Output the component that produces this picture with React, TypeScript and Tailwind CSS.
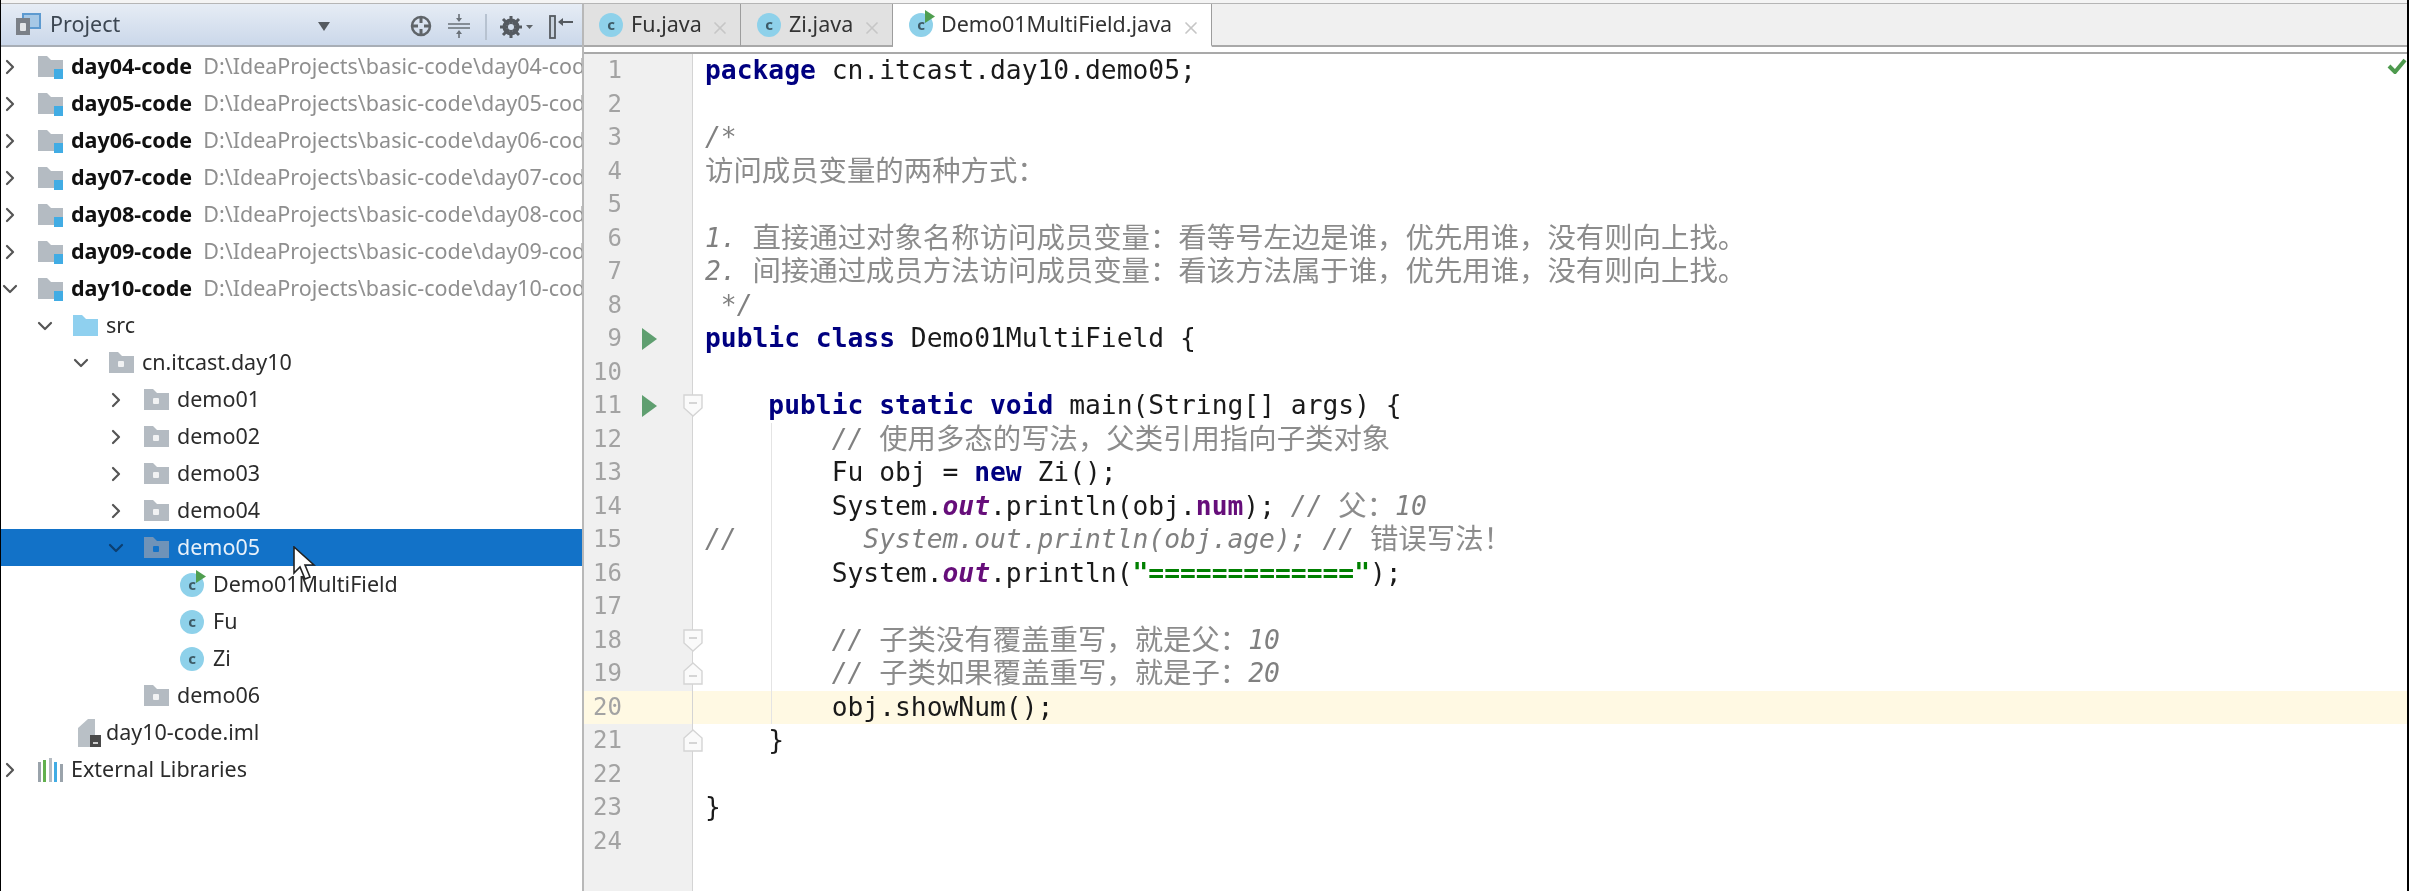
import React from "react";
import { ChevronDown, ChevronRight, X } from "lucide-react";

type TreeRow = {
  name: string;
  path?: string;
  depth: number;
  open?: boolean;
  arrow?: boolean;
  icon: "module" | "src" | "pkg" | "run" | "class" | "iml" | "libs";
  selected?: boolean;
};

const days = ["04", "05", "06", "07", "08", "09"];

const tree: TreeRow[] = [
  ...days.map((d): TreeRow => ({
    name: `day${d}-code`,
    path: `D:\\IdeaProjects\\basic-code\\day${d}-code`,
    depth: 0,
    arrow: true,
    icon: "module",
  })),
  { name: "day10-code", path: "D:\\IdeaProjects\\basic-code\\day10-code", depth: 0, arrow: true, open: true, icon: "module" },
  { name: "src", depth: 1, arrow: true, open: true, icon: "src" },
  { name: "cn.itcast.day10", depth: 2, arrow: true, open: true, icon: "pkg" },
  { name: "demo01", depth: 3, arrow: true, icon: "pkg" },
  { name: "demo02", depth: 3, arrow: true, icon: "pkg" },
  { name: "demo03", depth: 3, arrow: true, icon: "pkg" },
  { name: "demo04", depth: 3, arrow: true, icon: "pkg" },
  { name: "demo05", depth: 3, arrow: true, open: true, icon: "pkg", selected: true },
  { name: "Demo01MultiField", depth: 4, icon: "run" },
  { name: "Fu", depth: 4, icon: "class" },
  { name: "Zi", depth: 4, icon: "class" },
  { name: "demo06", depth: 3, icon: "pkg" },
  { name: "day10-code.iml", depth: 1, icon: "iml" },
  { name: "External Libraries", depth: 0, arrow: true, icon: "libs" },
];

const depthPad = ["pl-0", "pl-[35px]", "pl-[71px]", "pl-[106px]", "pl-[142px]"];

function Folder({ fill = "#b4bbc2", children }: { fill?: string; children?: React.ReactNode }) {
  return (
    <svg width="25" height="24" viewBox="0 0 25 24" className="shrink-0">
      <path d="M0 1h9l4 4h12v17H0z" fill={fill} />
      {children}
    </svg>
  );
}

function ClassIcon({ run = false }: { run?: boolean }) {
  return (
    <div className="relative w-[24px] h-[24px] shrink-0 rounded-full bg-[#8ed1ea] flex items-center justify-center text-[15px] leading-none font-bold text-[#3d5a66] font-['Noto_Sans',sans-serif]">
      c
      {run && (
        <svg width="10" height="13" viewBox="0 0 10 13" className="absolute -top-[3px] -right-[2px]">
          <path d="M0 0l10 6.5L0 13z" fill="#4f9e4f" />
        </svg>
      )}
    </div>
  );
}

function TreeIcon({ kind, selected }: { kind: TreeRow["icon"]; selected?: boolean }) {
  if (kind === "module")
    return (
      <Folder>
        <rect x="16" y="14" width="9" height="10" fill="#41ace4" />
      </Folder>
    );
  if (kind === "src") return <Folder fill="#8fd0ef" />;
  if (kind === "pkg")
    return (
      <Folder fill={selected ? "#6f93b8" : "#b4bbc2"}>
        <rect x="9" y="10" width="6" height="6" rx="1" fill={selected ? "#1272c8" : "#f1f2f3"} />
      </Folder>
    );
  if (kind === "run") return <ClassIcon run />;
  if (kind === "class") return <ClassIcon />;
  if (kind === "iml")
    return (
      <svg width="23" height="30" viewBox="0 0 23 30" className="shrink-0">
        <path d="M0 10l10-9h7v28H0z" fill="#b9c0c6" />
        <rect x="12" y="17" width="11" height="12" fill="#4a4a4a" />
        <rect x="15" y="24" width="5" height="2" fill="#cfcfcf" />
      </svg>
    );
  return (
    <svg width="25" height="24" viewBox="0 0 25 24" className="shrink-0">
      <rect x="0" y="4" width="3" height="20" fill="#9aa3ab" />
      <rect x="5" y="2" width="3" height="22" fill="#62b04e" />
      <rect x="11" y="0" width="3" height="24" fill="#b4bbc2" />
      <rect x="16" y="4" width="3" height="20" fill="#41ace4" />
      <rect x="22" y="6" width="3" height="18" fill="#9aa3ab" />
    </svg>
  );
}

function Row({ row }: { row: TreeRow }) {
  const iconSlot = row.icon === "iml" ? "w-[33px] pl-[5px]" : "w-[33px]";
  return (
    <div
      className={`flex items-center h-[37px] whitespace-nowrap overflow-hidden ${depthPad[row.depth]} ${
        row.selected ? "bg-[#1272c8] text-[#e8f1fa]" : "text-[#2b2b2b]"
      }`}
    >
      <div className="w-[37px] shrink-0 flex">
        {row.arrow &&
          (row.open ? (
            <ChevronDown size={24} strokeWidth={2.2} className={`-ml-[3px] ${row.selected ? "text-[#0d3f70]" : "text-[#555]"}`} />
          ) : (
            <ChevronRight size={24} strokeWidth={2.2} className="-ml-[3px] text-[#555]" />
          ))}
      </div>
      <div className={`${iconSlot} shrink-0 flex items-center`}>
        <TreeIcon kind={row.icon} selected={row.selected} />
      </div>
      <span className={row.path ? "font-bold text-[#111]" : ""}>{row.name}</span>
      {row.path && <span className="ml-[11px] text-[#8f8f8f]">{row.path}</span>}
    </div>
  );
}

function ProjectIcon() {
  return (
    <svg width="26" height="23" viewBox="0 0 26 23">
      <rect x="8" y="1" width="17" height="14" fill="#a6c8e6" stroke="#5d9ad0" strokeWidth="2" />
      <rect x="1" y="5" width="14" height="17" fill="#7b8087" />
      <rect x="5" y="10" width="6" height="8" rx="1" fill="#e4e6e8" />
    </svg>
  );
}

function ToolButtons() {
  return (
    <>
      <svg width="22" height="22" viewBox="0 0 22 22" className="absolute left-[409px] top-[11px]">
        <circle cx="11" cy="11" r="9" fill="none" stroke="#5f6469" strokeWidth="2.5" />
        <path d="M11 3v5M11 14v5M3 11h5M14 11h5" stroke="#5f6469" strokeWidth="3" />
      </svg>
      <svg width="24" height="26" viewBox="0 0 24 26" className="absolute left-[446px] top-[9px]">
        <path d="M1 11h22M1 15h22" stroke="#6a7178" strokeWidth="1.6" />
        <path d="M12 1v7M12 18v7" stroke="#6a7178" strokeWidth="1.6" />
        <path d="M9 5l3 4 3-4zM9 21l3-4 3 4z" fill="#6a7178" />
      </svg>
      <div className="absolute left-[484px] top-[10px] w-[2px] h-[26px] bg-[#b7c2d0]" />
      <svg width="34" height="24" viewBox="0 0 34 24" className="absolute left-[498px] top-[11px]">
        <circle cx="12" cy="12" r="6.5" fill="none" stroke="#555a60" strokeWidth="4" />
        <path d="M12 1v22M1 12h22M4 4l16 16M20 4L4 20" stroke="#555a60" strokeWidth="3" />
        <circle cx="12" cy="12" r="3" fill="#d3deec" />
        <path d="M27 10h7l-3.5 4z" fill="#5f6469" />
      </svg>
      <svg width="24" height="24" viewBox="0 0 24 24" className="absolute left-[548px] top-[11px]">
        <rect x="1" y="1" width="5" height="22" fill="#c9d3df" stroke="#555a60" strokeWidth="1.8" />
        <path d="M10 7h14" stroke="#555a60" strokeWidth="2" />
        <path d="M9 7l5-4v8z" fill="#555a60" />
      </svg>
    </>
  );
}

function Tab({ name, active, run, width, pad }: { name: string; active?: boolean; run?: boolean; width: string; pad: string }) {
  return (
    <div
      className={`${width} ${pad} relative flex items-center border-r border-r-[#9d9d9d] border-b-2 ${
        active ? "bg-white border-b-white" : "bg-[#e1e1e1] border-b-[#a9a9a9]"
      }`}
    >
      <ClassIcon run={run} />
      <span className="ml-[8px] text-[#333]">{name}</span>
      <X size={20} strokeWidth={2} className="absolute right-[10px] top-[14px] text-[#c6c6c6]" />
    </div>
  );
}

function Cjk({ children }: { children: React.ReactNode }) {
  return (
    <span className="not-italic leading-none align-[-1px] text-[28.4px] text-[#8c8c8c] font-['Noto_Sans_CJK_SC',sans-serif]">
      {children}
    </span>
  );
}

function Kw({ children }: { children: React.ReactNode }) {
  return <span className="font-bold text-[#000080]">{children}</span>;
}

function Cm({ children }: { children: React.ReactNode }) {
  return <span className="italic text-[#808080]">{children}</span>;
}

function Field({ children }: { children: React.ReactNode }) {
  return <span className="font-bold text-[#660e7a]">{children}</span>;
}

function OutField() {
  return <span className="font-bold italic text-[#660e7a]">out</span>;
}

const code: React.ReactNode[] = [
  <><Kw>package</Kw> cn.itcast.day10.demo05;</>,
  "",
  <Cm>/*</Cm>,
  <Cm><Cjk>访问成员变量的两种方式：</Cjk></Cm>,
  "",
  <Cm>1. <Cjk>直接通过对象名称访问成员变量：看等号左边是谁，优先用谁，没有则向上找。</Cjk></Cm>,
  <Cm>2. <Cjk>间接通过成员方法访问成员变量：看该方法属于谁，优先用谁，没有则向上找。</Cjk></Cm>,
  <Cm> */</Cm>,
  <><Kw>public class</Kw> Demo01MultiField {"{"}</>,
  "",
  <>    <Kw>public static void</Kw> main(String[] args) {"{"}</>,
  <>        <Cm>// <Cjk>使用多态的写法，父类引用指向子类对象</Cjk></Cm></>,
  <>        Fu obj = <Kw>new</Kw> Zi();</>,
  <>        System.<OutField />.println(obj.<Field>num</Field>); <Cm>// <Cjk>父：</Cjk>10</Cm></>,
  <Cm>//        System.out.println(obj.age); // <Cjk>错误写法！</Cjk></Cm>,
  <>        System.<OutField />.println(<span className="font-bold text-[#008000]">"============="</span>);</>,
  "",
  <>        <Cm>// <Cjk>子类没有覆盖重写，就是父：</Cjk>10</Cm></>,
  <>        <Cm>// <Cjk>子类如果覆盖重写，就是子：</Cjk>20</Cm></>,
  <>        obj.showNum();</>,
  <>    {"}"}</>,
  "",
  "}",
  "",
];

const runLines = [9, 11];
const foldDown = [11, 18];
const foldUp = [19, 21];

function FoldMark({ up }: { up?: boolean }) {
  return (
    <svg width="20" height="23" viewBox="0 0 20 23" className="absolute left-[99px] top-[5px]">
      <path
        d={up ? "M10 1l9 8v13H1V9z" : "M1 1h18v13l-9 8-9-8z"}
        fill="#fafafa"
        stroke="#d4d4d4"
        strokeWidth="1.4"
      />
      <path d={up ? "M6 14h8" : "M6 9h8"} stroke="#c4c4c4" strokeWidth="1.4" />
    </svg>
  );
}

function CodeLine({ n, children }: { n: number; children: React.ReactNode }) {
  const caret = n === 20;
  return (
    <div className={`flex h-[33.5px] leading-[33.5px] ${caret ? "bg-[#fff9e3]" : ""}`}>
      <div
        className={`relative w-[109px] shrink-0 border-r border-r-[#d4d4d4] text-[#a3a3a3] text-[24px] ${
          caret ? "" : "bg-[#f0f0f0]"
        }`}
      >
        <div className="w-[38px] text-right">{n}</div>
        {runLines.includes(n) && (
          <svg width="15" height="22" viewBox="0 0 15 22" className="absolute left-[58px] top-[6px]">
            <path d="M0 0l15 11L0 22z" fill="#5f9f70" />
          </svg>
        )}
        {foldDown.includes(n) && <FoldMark />}
        {foldUp.includes(n) && <FoldMark up />}
      </div>
      <div className="relative flex-1 pl-[12px] whitespace-pre text-[#1a1a1a]">
        {n >= 12 && n <= 20 && <div className="absolute left-[78px] inset-y-0 w-px bg-[#e4e4e4]" />}
        {children}
      </div>
    </div>
  );
}

export default function App() {
  return (
    <div className="relative w-[2409px] h-[891px] overflow-hidden bg-black pl-px pr-[2px] blur-[0.6px]">
      <div className="flex h-full bg-[#f4f4f4] pt-[3px] font-['Noto_Sans',sans-serif] text-[21.5px]">
        {/* Project panel */}
        <div className="w-[583px] shrink-0 flex flex-col bg-white border-r-2 border-r-[#b8b8b8]">
          <div className="relative h-[44px] shrink-0 flex items-center pl-[14px] border-t border-t-[#b5b5b5] border-b-2 border-b-[#a8aeb6] bg-gradient-to-b from-[#e6ecf5] to-[#cbd8ea]">
            <ProjectIcon />
            <span className="ml-[9px] text-[#3c4652]">Project</span>
            <svg width="12" height="9" viewBox="0 0 12 9" className="absolute left-[317px] top-[18px]">
              <path d="M0 0h12L6 9z" fill="#555a60" />
            </svg>
            <ToolButtons />
          </div>
          <div className="flex-1 flex flex-col pt-px">
            {tree.map((row) => (
              <Row key={row.name + row.depth} row={row} />
            ))}
          </div>
        </div>

        {/* Editor */}
        <div className="flex-1 flex flex-col min-w-0 bg-white">
          <div className="flex h-[44px] shrink-0 border-t border-t-[#b5b5b5]">
            <Tab name="Fu.java" width="w-[157px]" pad="pl-[15px]" />
            <Tab name="Zi.java" width="w-[152px]" pad="pl-[16px]" />
            <Tab name="Demo01MultiField.java" width="w-[319px]" pad="pl-[16px]" active run />
            <div className="flex-1 bg-[#f0f0f0] border-b-2 border-b-[#a9a9a9]" />
          </div>
          <div className="h-[7px] shrink-0 bg-white border-b-2 border-b-[#a9a9a9]" />
          <div className="relative flex-1 flex flex-col font-['DejaVu_Sans_Mono','Noto_Sans_CJK_SC',monospace] text-[26.3px]">
            {code.map((c, i) => (
              <CodeLine key={i} n={i + 1}>
                {c}
              </CodeLine>
            ))}
            <div className="flex-1 w-[109px] bg-[#f0f0f0] border-r border-r-[#d4d4d4]" />
            <svg width="20" height="16" viewBox="0 0 20 16" className="absolute right-0 top-[4px]">
              <path d="M2 8l6 6L18 2" fill="none" stroke="#4e9a4e" strokeWidth="4" />
            </svg>
          </div>
        </div>
      </div>

      {/* mouse pointer */}
      <svg width="24" height="36" viewBox="0 0 24 36" className="absolute left-[292px] top-[546px]">
        <path d="M2 1v26l6-6 5 12 5-2-5-12h9z" fill="#fff" stroke="#222" strokeWidth="1.6" />
      </svg>
    </div>
  );
}
